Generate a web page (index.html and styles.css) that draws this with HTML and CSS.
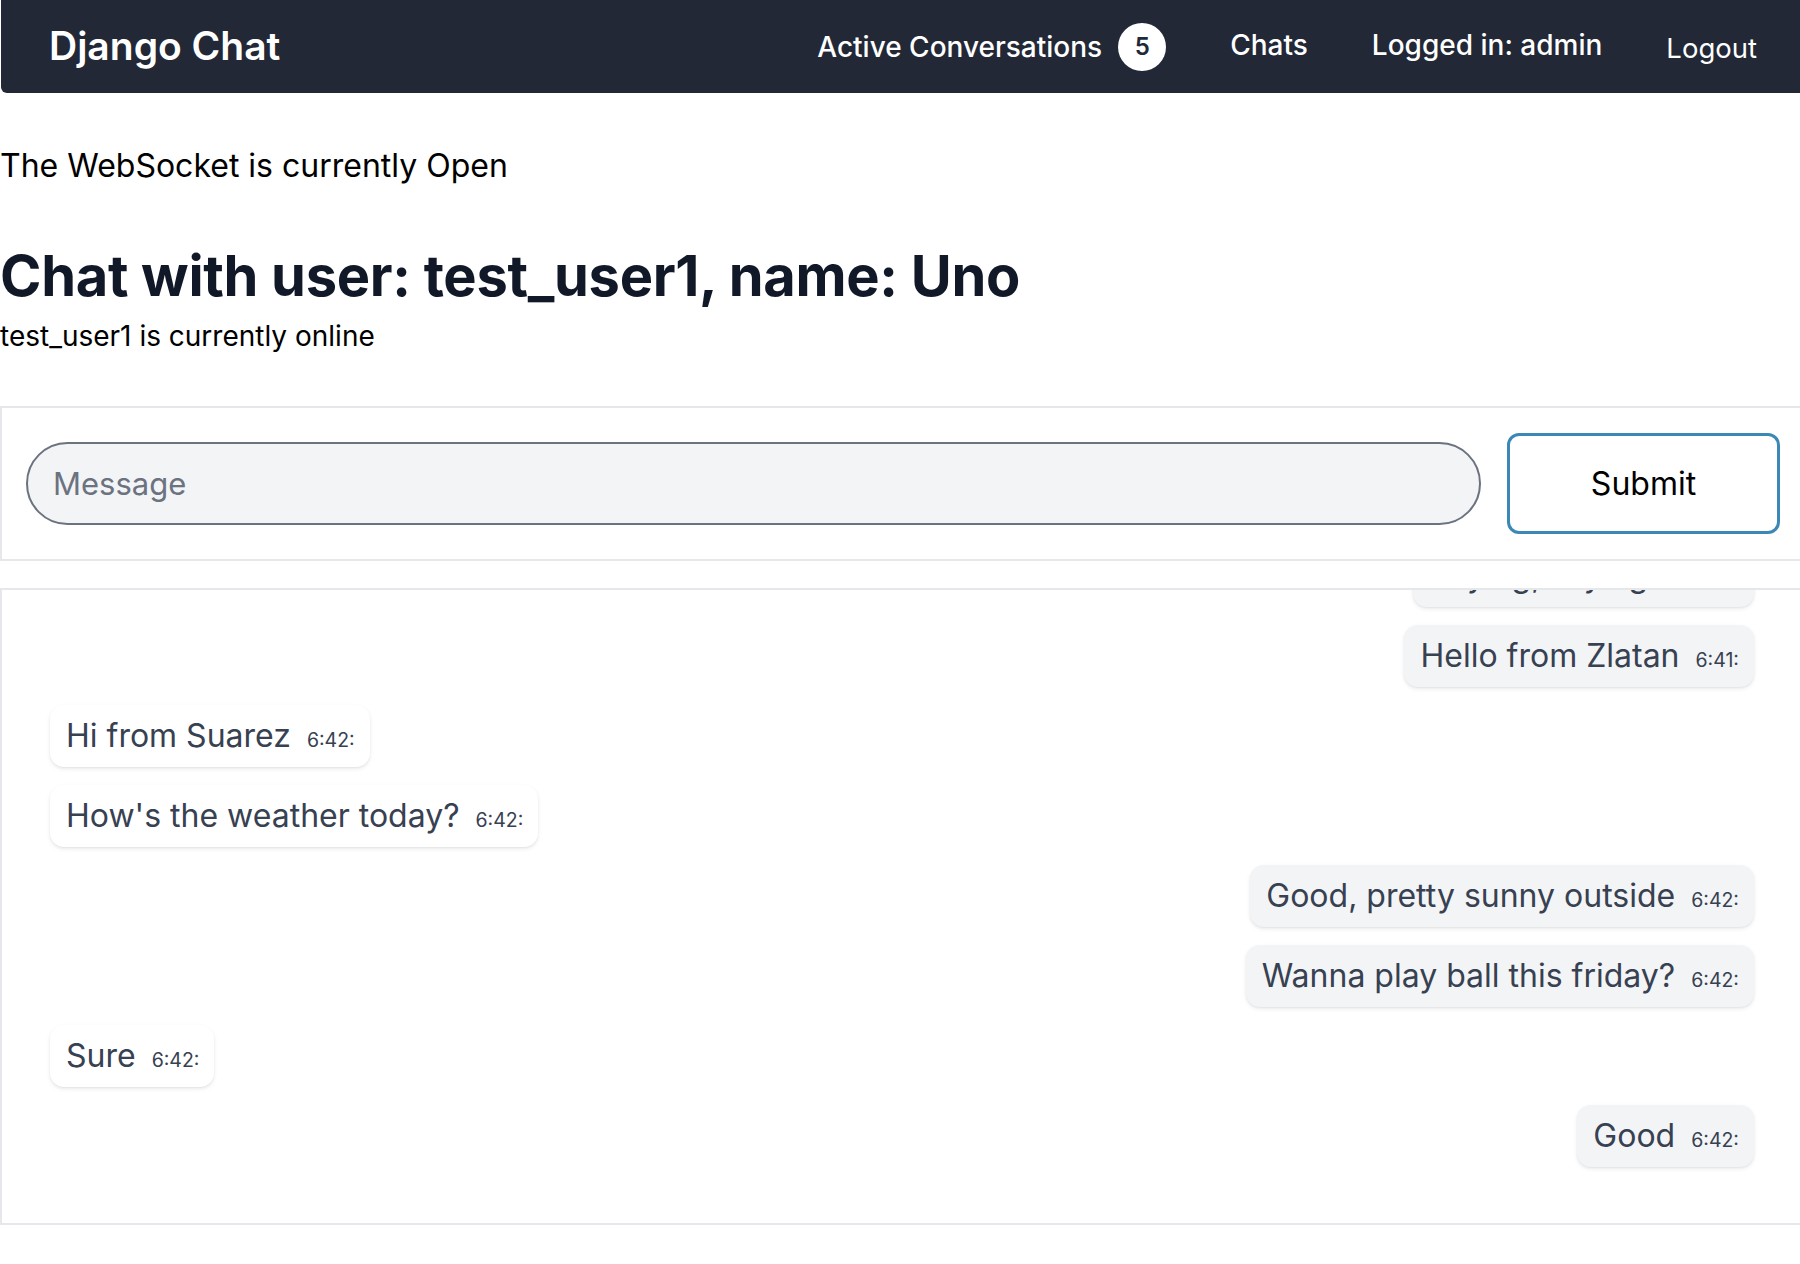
FILE: index.html
```html
<!DOCTYPE html>
<html lang="en">
<head>
<meta charset="utf-8">
<title>Django Chat</title>
<link rel="stylesheet" href="styles.css">
</head>
<body>
<nav class="navbar">
  <a class="brand" href="#">Django Chat</a>
  <ul class="nav-links">
    <li class="nav-item nav-active">Active Conversations <span class="badge">5</span></li>
    <li class="nav-item nav-up">Chats</li>
    <li class="nav-item nav-up">Logged in: admin</li>
    <li class="nav-item nav-logout">Logout</li>
  </ul>
</nav>

<p class="ws-status">The WebSocket is currently Open</p>
<h1 class="chat-title">Chat with user: test_user1, name: Uno</h1>
<p class="online">test_user1 is currently online</p>

<form class="send-card">
  <input class="msg-input" type="text" placeholder="Message">
  <button class="submit-btn" type="button">Submit</button>
</form>

<div class="messages">
  <div class="bubble mine"><span class="text">Saying, saying...</span><span class="time">6:28:</span></div>
  <div class="bubble mine"><span class="text">Hello from Zlatan</span><span class="time">6:41:</span></div>
  <div class="bubble theirs"><span class="text">Hi from Suarez</span><span class="time">6:42:</span></div>
  <div class="bubble theirs"><span class="text">How's the weather today?</span><span class="time">6:42:</span></div>
  <div class="bubble mine"><span class="text">Good, pretty sunny outside</span><span class="time">6:42:</span></div>
  <div class="bubble mine"><span class="text">Wanna play ball this friday?</span><span class="time">6:42:</span></div>
  <div class="bubble theirs"><span class="text">Sure</span><span class="time">6:42:</span></div>
  <div class="bubble mine"><span class="text">Good</span><span class="time">6:42:</span></div>
</div>
</body>
</html>
```

FILE: styles.css
```css
* { box-sizing: border-box; }

html, body {
  margin: 0;
  padding: 0;
  background: #ffffff;
  overflow: hidden;
}

body {
  font-family: Inter, "Liberation Sans", sans-serif;
  color: #000;
}

.navbar {
  height: 93px;
  background: #222836;
  display: flex;
  align-items: center;
  justify-content: space-between;
  padding: 0 43px 0 48px;
  margin-left: 1px;
  border-bottom-left-radius: 6px;
}

.brand {
  color: #fff;
  text-decoration: none;
  font-size: 39px;
  font-weight: 600;
  margin-top: -2px;
}

.nav-links {
  list-style: none;
  margin: 0;
  padding: 0;
  display: flex;
  align-items: center;
  gap: 64px;
}

.nav-item {
  color: #fff;
  font-size: 28px;
  font-weight: 500;
  display: flex;
  align-items: center;
}

.nav-active { gap: 16px; }

.nav-up { margin-top: -4px; }

.nav-logout { font-weight: 400; font-size: 27.5px; margin-top: 2px; }

.badge {
  width: 48px;
  height: 48px;
  border-radius: 50%;
  background: #fff;
  color: #1f2937;
  font-size: 24px;
  font-weight: 600;
  display: flex;
  align-items: center;
  justify-content: center;
}

.ws-status {
  margin: 53px 0 0 0;
  font-size: 32px;
  line-height: 40px;
}

.chat-title {
  margin: 58px 0 0 0;
  font-size: 56px;
  line-height: 64px;
  font-weight: 700;
  color: #111827;
  letter-spacing: -0.3px;
}

.online {
  margin: 12px 0 0 0;
  font-size: 28px;
  line-height: 32px;
}

.send-card {
  margin: 54px 0 0 0;
  border: 2px solid #e5e7eb;
  border-right: none;
  display: flex;
  align-items: center;
  gap: 26px;
  padding: 25px 20px 25px 24px;
}

.msg-input {
  flex: 1;
  height: 83px;
  border-radius: 42px;
  border: 2px solid #6b7280;
  background: #f3f4f6;
  padding: 0 25px;
  font-family: inherit;
  font-size: 31px;
  color: #111827;
  outline: none;
}

.msg-input::placeholder { color: #6b7280; }

.submit-btn {
  width: 273px;
  height: 101px;
  border: 3px solid #3b88b6;
  border-radius: 12px;
  background: #fff;
  font-family: inherit;
  font-size: 32px;
  color: #000;
}

.messages {
  margin-top: 27px;
  height: 637px;
  border: 2px solid #e5e7eb;
  border-right: none;
  overflow: hidden;
  display: flex;
  flex-direction: column;
  justify-content: flex-end;
  gap: 18px;
  padding: 0 46px 56px 48px;
}

.bubble {
  flex: none;
  height: 62px;
  display: flex;
  align-items: baseline;
  gap: 16px;
  padding: 11px 15px 0 16px;
  border-radius: 14px;
  box-shadow: 0 2px 4px rgba(0, 0, 0, 0.08), 0 1px 2px rgba(0, 0, 0, 0.05);
  color: #374151;
}

.bubble.theirs { align-self: flex-start; background: #ffffff; }
.bubble.mine { align-self: flex-end; background: #f3f4f6; }

.text {
  font-size: 32px;
  line-height: 40px;
}

.time {
  font-size: 19.5px;
}
```
